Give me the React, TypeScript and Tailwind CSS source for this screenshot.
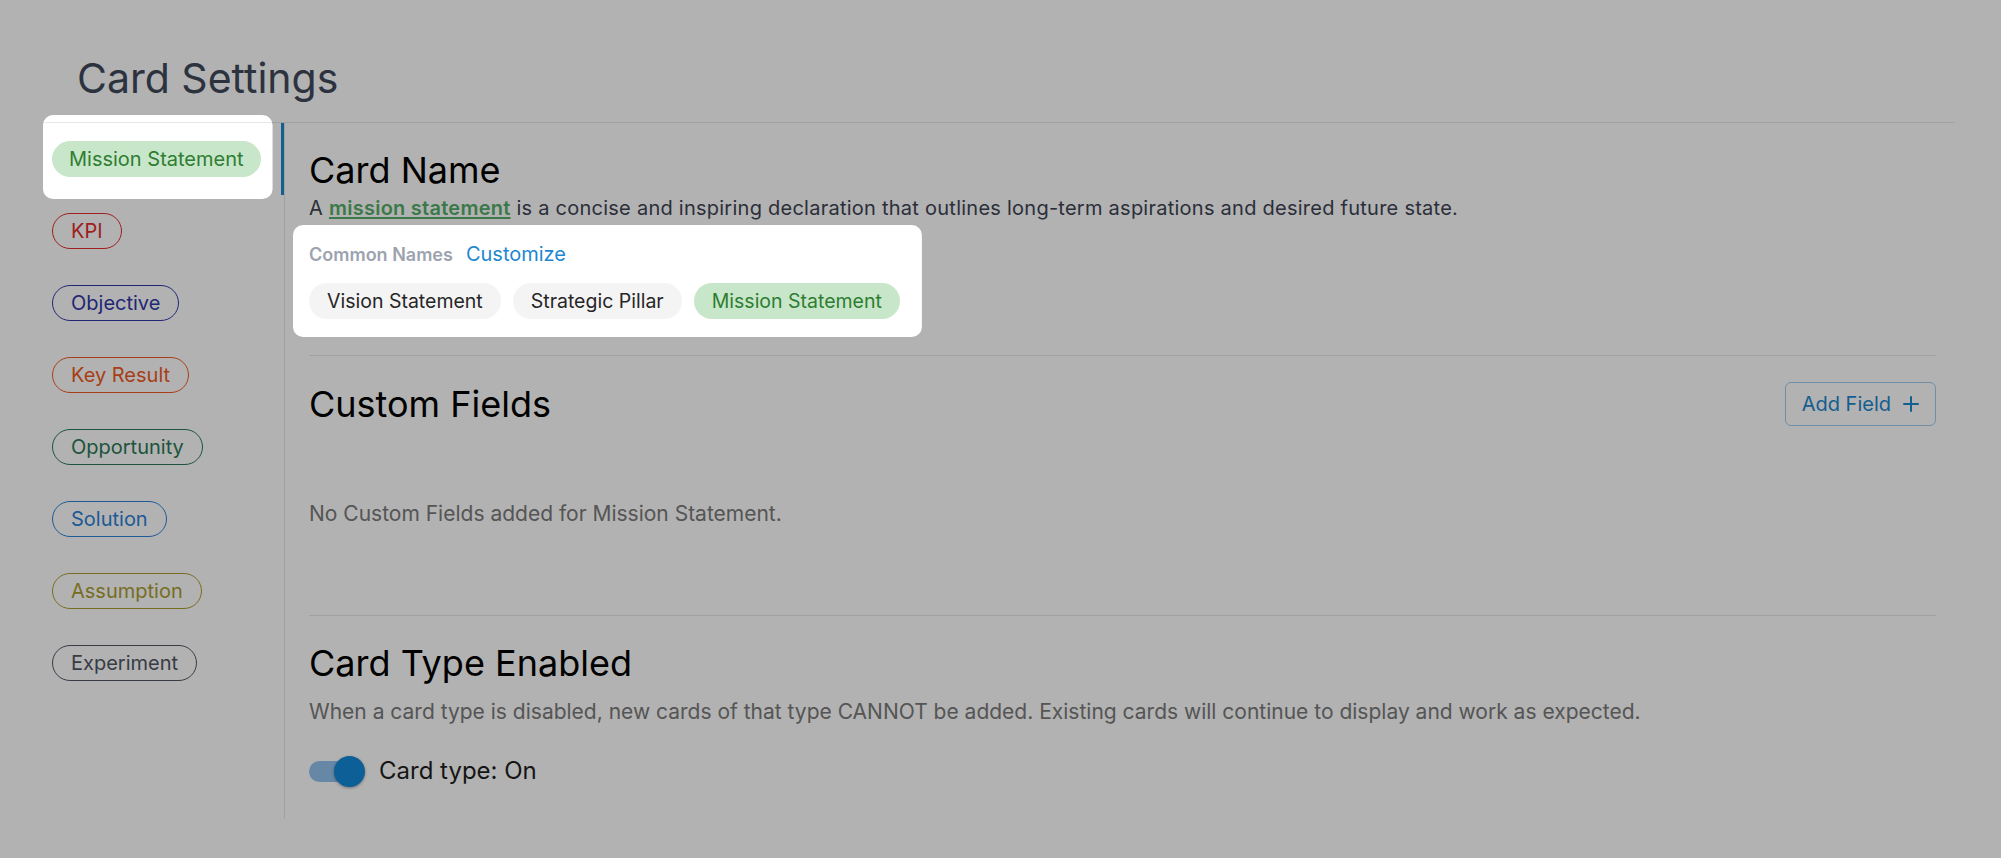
import { useLayoutEffect, useRef, useState } from 'react'

type Rect = { x: number; y: number; w: number; h: number }

const cardTypes = [
  { name: 'Mission Statement', cls: 'border-[#c8e6c9] bg-[#c8e6c9] px-4 text-[#2e7d32]', active: true },
  { name: 'KPI', cls: 'border-[#e52b2b] px-[18px] text-[#e52b2b]' },
  { name: 'Objective', cls: 'border-[#3139a8] px-[18px] text-[#3139a8]' },
  { name: 'Key Result', cls: 'border-[#f05a24] px-[18px] text-[#f05a24]' },
  { name: 'Opportunity', cls: 'border-[#2b7956] px-[18px] text-[#2b7956]' },
  { name: 'Solution', cls: 'border-[#2b81d6] px-[18px] text-[#2b81d6]' },
  { name: 'Assumption', cls: 'border-[#ab9d32] px-[18px] text-[#ab9d32]' },
  { name: 'Experiment', cls: 'border-[#4f5664] px-[18px] text-[#4f5664]' },
]

const commonNames = ['Vision Statement', 'Strategic Pillar', 'Mission Statement']

// rounded rect as a sub path, used to punch holes in the tour overlay
function roundRect({ x, y, w, h }: Rect, r = 10) {
  return `M${x + r} ${y}H${x + w - r}A${r} ${r} 0 0 1 ${x + w} ${y + r}V${y + h - r}A${r} ${r} 0 0 1 ${x + w - r} ${y + h}H${x + r}A${r} ${r} 0 0 1 ${x} ${y + h - r}V${y + r}A${r} ${r} 0 0 1 ${x + r} ${y}Z`
}

export default function App() {
  const pillRef = useRef<HTMLSpanElement>(null)
  const namesRef = useRef<HTMLDivElement>(null)
  const [holes, setHoles] = useState<Rect[]>([])
  const [vw, setVw] = useState(2001)

  useLayoutEffect(() => {
    const measure = () => {
      const next: Rect[] = []
      if (pillRef.current) {
        const r = pillRef.current.getBoundingClientRect()
        next.push({ x: r.left - 9, y: r.top - 26, w: r.width + 21, h: r.height + 48 })
      }
      if (namesRef.current) {
        const r = namesRef.current.getBoundingClientRect()
        next.push({ x: r.left, y: r.top, w: r.width, h: r.height })
      }
      setHoles(next)
      setVw(window.innerWidth)
    }
    measure()
    window.addEventListener('resize', measure)
    return () => window.removeEventListener('resize', measure)
  }, [])

  const overlayPath = `M0 0H${vw}V858H0Z` + holes.map((h) => roundRect(h)).join('')

  return (
    <div className="min-h-[860px] bg-white font-[Inter,sans-serif]">
      <div className="pl-[45px] pr-[46px]">
        <div className="border-b border-[#e5e7eb] pb-5 pl-8 pt-[54px]">
          <h1 className="text-[41px] leading-[48px] text-[#404a5b]">Card Settings</h1>
        </div>

        <div className="flex">
          <nav className="w-[240px] shrink-0 border-r border-[#e5e7eb]">
            {cardTypes.map((t) => (
              <div
                key={t.name}
                className={
                  t.active
                    ? 'flex h-[72px] items-center border-r-[3px] border-[#1d87cf] pl-[7px]'
                    : 'flex h-[72px] items-center pl-[7px]'
                }
              >
                <span
                  ref={t.active ? pillRef : undefined}
                  className={'rounded-full border py-[5px] text-[20px] leading-6 ' + t.cls}
                >
                  {t.name}
                </span>
              </div>
            ))}
          </nav>

          <div className="flex-1 pb-8 pl-6 pr-[19px]">
            <section className="border-b border-[#e5e7eb] pb-[18px] pt-[27px]">
              <h2 className="text-4xl leading-10 text-black">Card Name</h2>
              <p className="mt-1 text-[20px] leading-7 tracking-[0.25px] text-[#3d4453]">
                A{' '}
                <a href="#" className="font-semibold text-[#56ae6a] underline underline-offset-2">
                  mission statement
                </a>{' '}
                is a concise and inspiring declaration that outlines long-term aspirations and desired future state.
              </p>
              <div ref={namesRef} className="-ml-4 mt-[3px] w-fit rounded-[10px] pb-[18px] pl-4 pr-[22px] pt-[15px]">
                <div className="flex items-baseline gap-[13px]">
                  <span className="text-[18px] font-semibold leading-7 text-[#9ca3af]">Common Names</span>
                  <button className="text-[20px] leading-7 text-[#1d87cf]">Customize</button>
                </div>
                <div className="mt-[14px] flex gap-3">
                  {commonNames.map((n, i) => (
                    <span
                      key={n}
                      className={
                        i === 2
                          ? 'rounded-full bg-[#c8e6c9] px-[18px] py-[6px] text-[19.5px] leading-6 text-[#2e7d32]'
                          : 'rounded-full bg-[#f4f4f5] px-[18px] py-[6px] text-[19.5px] leading-6 text-[#262626]'
                      }
                    >
                      {n}
                    </span>
                  ))}
                </div>
              </div>
            </section>

            <section className="border-b border-[#e5e7eb] pb-[87px] pt-[26px]">
              <div className="flex items-center justify-between">
                <h2 className="text-4xl leading-10 text-black">Custom Fields</h2>
                <button className="flex h-[44px] items-center gap-3 rounded-md border border-[#a0cdf2] px-4 text-[20px] leading-7 text-[#1d87cf]">
                  Add Field
                  <svg width="16" height="16" viewBox="0 0 16 16" fill="none" stroke="currentColor" strokeWidth="2" strokeLinecap="round">
                    <path d="M8 1v14M1 8h14" />
                  </svg>
                </button>
              </div>
              <p className="mt-[74px] text-[21px] leading-7 text-[#7a7a7a]">No Custom Fields added for Mission Statement.</p>
            </section>

            <section className="pt-[27px]">
              <h2 className="text-4xl leading-10 text-black">Card Type Enabled</h2>
              <p className="mt-[15px] text-[21px] leading-7 text-[#7a7a7a]">
                When a card type is disabled, new cards of that type CANNOT be added. Existing cards will continue to display and work as expected.
              </p>
              <div className="mt-[29px] flex items-center gap-[14px]">
                <button role="switch" aria-checked="true" className="relative h-[31px] w-[56px] shrink-0">
                  <span className="absolute left-0 top-[5px] h-[21px] w-[46px] rounded-full bg-[#92c2ed]" />
                  <span className="absolute right-0 top-0 h-[31px] w-[31px] rounded-full bg-[#1389d9] shadow-[0_1px_3px_rgba(0,0,0,0.35)]" />
                </button>
                <span className="text-[24px] leading-8 text-[#1f1f1f]">Card type: On</span>
              </div>
            </section>
          </div>
        </div>
      </div>

      {/* tour overlay with spotlight holes */}
      <svg className="pointer-events-none fixed left-0 top-0" width={vw} height={858}>
        <path d={overlayPath} fill="rgba(0,0,0,0.3)" fillRule="evenodd" />
      </svg>
    </div>
  )
}
